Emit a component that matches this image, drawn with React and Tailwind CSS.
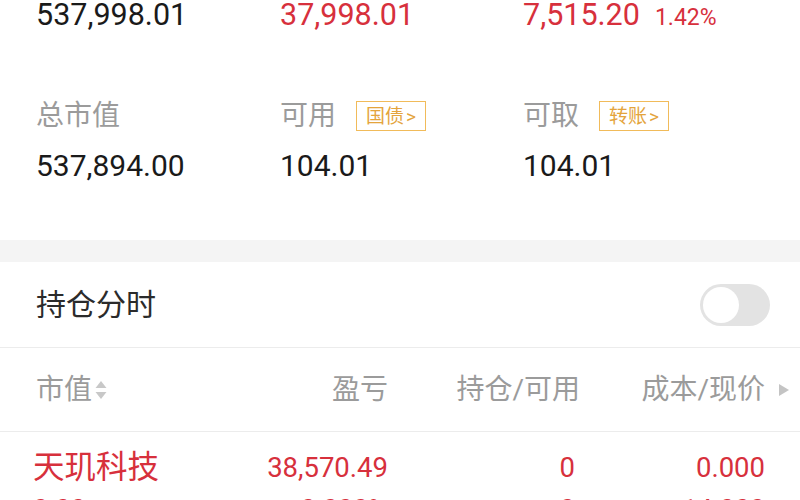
const font = { fontFamily: '"Roboto", "Noto Sans CJK SC", sans-serif' };

const Badge = ({ children }) => (
  <span className="ml-[20px] inline-flex h-[30px] items-center border-[1.5px] border-[#f1bb5a] px-[9px] text-[19px] leading-none text-[#e4a43c]">
    {children}
    <span className="ml-[2px]">&gt;</span>
  </span>
);

const SortIcon = () => (
  <svg width="14" height="22" viewBox="0 0 14 22" className="ml-[2px]">
    <path d="M7 2 L12.5 9 L1.5 9 Z" fill="#c8c8c8" />
    <path d="M7 20 L12.5 13 L1.5 13 Z" fill="#c8c8c8" />
  </svg>
);

export default function App() {
  return (
    <div className="h-[500px] w-[800px] overflow-hidden bg-white" style={font}>
      {/* account summary */}
      <div className="h-[240px]">
        <div className="grid h-[30px] grid-cols-[244px_243px_1fr] items-center pl-[36px] text-[30.5px] leading-none">
          <div className="text-[#1a1a1a]">537,998.01</div>
          <div className="text-[#d7303c]">37,998.01</div>
          <div className="flex items-baseline text-[#d7303c]">
            7,515.20
            <span className="ml-[15px] text-[23px]">1.42%</span>
          </div>
        </div>

        <div className="mt-[70px] grid h-[32px] grid-cols-[244px_243px_1fr] items-center pl-[36px] text-[28px] leading-none text-[#9b9b9b]">
          <div>总市值</div>
          <div className="flex items-center">
            可用
            <Badge>国债</Badge>
          </div>
          <div className="flex items-center">
            可取
            <Badge>转账</Badge>
          </div>
        </div>

        <div className="mt-[19px] grid h-[30px] grid-cols-[244px_243px_1fr] items-center pl-[36px] text-[30px] leading-none text-[#1a1a1a]">
          <div>537,894.00</div>
          <div>104.01</div>
          <div>104.01</div>
        </div>
      </div>

      <div className="h-[22px] bg-[#f4f4f4]" />

      {/* intraday toggle */}
      <div className="flex h-[86px] items-center justify-between border-b border-[#ececec] pl-[36px] pr-[30px]">
        <span className="text-[30px] leading-none text-[#2b2b2b]">持仓分时</span>
        <div className="flex h-[42px] w-[70px] items-center rounded-full bg-[#e3e3e3] px-[3px]">
          <div className="h-[36px] w-[36px] rounded-full bg-white" />
        </div>
      </div>

      {/* table header */}
      <div className="flex h-[84px] items-center border-b border-[#ececec] text-[28px] leading-none text-[#9b9b9b]">
        <div className="flex w-[188px] items-center pl-[36px]">
          市值
          <SortIcon />
        </div>
        <div className="w-[200px] text-right">盈亏</div>
        <div className="w-[192px] text-right">持仓/可用</div>
        <div className="w-[185px] text-right">成本/现价</div>
        <svg width="12" height="14" viewBox="0 0 12 14" className="ml-[13px]">
          <path d="M1 1 L11 7 L1 13 Z" fill="#c4c4c4" />
        </svg>
      </div>

      {/* holdings */}
      <div className="pt-[19px] text-[#d7303c]">
        <div className="flex h-[34px] items-center leading-none">
          <div className="w-[188px] pl-[33px] text-[31.5px]">天玑科技</div>
          <div className="w-[200px] text-right text-[27.5px]">38,570.49</div>
          <div className="w-[187px] text-right text-[27.5px]">0</div>
          <div className="w-[190px] text-right text-[27.5px]">0.000</div>
        </div>
        <div className="mt-[10px] flex h-[30px] items-center text-[27px] leading-none">
          <div className="w-[188px] pl-[33px]">0.00</div>
          <div className="w-[200px] text-right">0.000%</div>
          <div className="w-[187px] text-right">0</div>
          <div className="w-[190px] text-right">14.000</div>
        </div>
      </div>
    </div>
  );
}
